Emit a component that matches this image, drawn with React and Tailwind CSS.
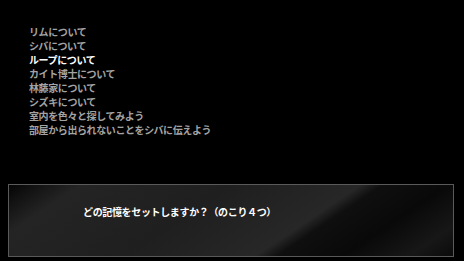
export default function App() {
  const items = [
    "リムについて",
    "シバについて",
    "ループについて",
    "カイト博士について",
    "林藤家について",
    "シズキについて",
    "室内を色々と探してみよう",
    "部屋から出られないことをシバに伝えよう",
  ];
  return (
    <div
      className="w-[464px] h-[261px] bg-black flex flex-col overflow-hidden"
      style={{ fontFamily: '"Noto Sans CJK JP", "Noto Sans", sans-serif' }}
    >
      <ul className="pt-[25px] pl-[29px] flex flex-col">
        {items.map((t, i) => (
          <li
            key={i}
            className={`h-[14px] leading-[14px] text-[10px] tracking-[-0.4px] font-bold ${
              i === 2 ? "text-white" : "text-[#a3a3a3]"
            }`}
          >
            {t}
          </li>
        ))}
      </ul>
      <div className="mt-[47px] ml-[8px] w-[446px] h-[73px] border border-[#5a5a5a] bg-[linear-gradient(146deg,#050505_0%,#121212_5%,#242424_13%,#1f1f1f_40%,#272727_64%,#0f0f0f_68%,#090909_80%,#171717_92%,#0b0b0b_100%)] flex items-start">
        <p className="pt-[20px] pl-[74px] text-[10px] tracking-[-0.35px] leading-[14px] font-bold text-white">
          どの記憶をセットしますか？（のこり４つ）
        </p>
      </div>
    </div>
  );
}
